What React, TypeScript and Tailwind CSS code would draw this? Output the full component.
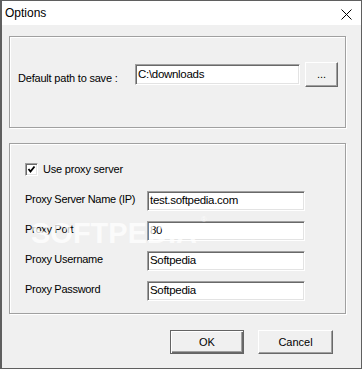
// Options dialog — Windows classic style settings window
import React from 'react'

const font = { fontFamily: '"Liberation Sans", Arial, sans-serif' }

function Field({ value, className = '' }: { value: string; className?: string }) {
  return (
    <div
      className={
        'flex items-center bg-white border border-t-[#a0a0a0] border-l-[#a0a0a0] border-b-white border-r-white shadow-[inset_1px_1px_0_#696969,inset_-1px_-1px_0_#e3e3e3] pl-[2px] text-[11.5px] tracking-[-0.3px] text-black ' +
        className
      }
    >
      {value}
    </div>
  )
}

function Button({ label, isDefault = false, className = '' }: { label: string; isDefault?: boolean; className?: string }) {
  return (
    <button
      className={
        'flex items-center justify-center bg-[#f0f0f0] text-[11px] text-black ' +
        (isDefault
          ? 'border border-[#646464] shadow-[inset_1px_1px_0_#fff,inset_-1px_-1px_0_#696969,inset_-2px_-2px_0_#a0a0a0] '
          : 'border border-t-white border-l-white border-b-[#696969] border-r-[#696969] shadow-[inset_-1px_-1px_0_#a0a0a0] ') +
        className
      }
    >
      {label}
    </button>
  )
}

function Row({ label, value }: { label: string; value: string }) {
  return (
    <div className="flex items-start h-[30px]">
      <span className="w-[122px] mt-[2px] text-[11px] tracking-[-0.3px] text-black leading-[13px]">{label}</span>
      <Field value={value} className="w-[158px] h-[20px]" />
    </div>
  )
}

export default function App() {
  return (
    <div
      className="relative w-[362px] h-[369px] border border-[#5f5f5f] border-l-2 bg-[#f0f0f0] overflow-hidden"
      style={font}
    >
      {/* Title bar */}
      <div className="flex items-center justify-between h-[24px] bg-white pl-[3px] pr-[9px]">
        <span className="text-[12px] text-black">Options</span>
        <svg width="11" height="11" viewBox="0 0 11 11" className="mt-[2px]">
          <path d="M0.5 0.5 L10.5 10.5 M10.5 0.5 L0.5 10.5" stroke="#000" strokeWidth="1" />
        </svg>
      </div>

      <div className="pl-[7px] pr-[15px] pt-[11px]">
        {/* Save path group */}
        <div className="h-[92px] border border-[#a0a0a0] shadow-[inset_1px_1px_0_#fff,1px_1px_0_#fff] pl-[8px] pt-[25px] flex items-start">
          <span className="w-[117px] mt-[10px] text-[11px] tracking-[-0.2px] leading-[13px] text-black">Default path to save :</span>
          <Field value="C:\downloads" className="w-[165px] h-[21px] mt-[2px]" />
          <Button label="..." className="w-[33px] h-[25px] ml-[5px]" />
        </div>

        {/* Proxy group */}
        <div className="h-[171px] mt-[15px] border border-[#a0a0a0] shadow-[inset_1px_1px_0_#fff,1px_1px_0_#fff] pl-[15px] pt-[19px] flex flex-col">
          <label className="flex items-center h-[13px] mb-[15px]">
            <span className="flex items-center justify-center w-[13px] h-[13px] bg-white border border-t-[#a0a0a0] border-l-[#a0a0a0] border-b-white border-r-white shadow-[inset_1px_1px_0_#696969,inset_-1px_-1px_0_#e3e3e3]">
              <svg width="9" height="9" viewBox="0 0 9 9">
                <path d="M1.5 4 L3.5 6.5 L7.5 1.5" stroke="#000" strokeWidth="1.8" fill="none" />
              </svg>
            </span>
            <span className="ml-[5px] text-[11px] tracking-[-0.2px] text-black">Use proxy server</span>
          </label>
          <Row label="Proxy Server Name (IP)" value="test.softpedia.com" />
          <Row label="Proxy Port" value="80" />
          <Row label="Proxy Username" value="Softpedia" />
          <Row label="Proxy Password" value="Softpedia" />
        </div>

        {/* Dialog buttons */}
        <div className="flex justify-end gap-[14px] mt-[16px] pr-[13px]">
          <Button label="OK" isDefault className="w-[74px] h-[24px]" />
          <Button label="Cancel" className="w-[75px] h-[24px]" />
        </div>
      </div>

      {/* Watermark */}
      <div className="absolute left-[29px] top-[211px] text-[29px] font-bold text-white/75 pointer-events-none select-none">
        SOFTPEDIA
        <span className="absolute -right-[10px] top-[2px] text-[8px] font-normal">®</span>
      </div>
    </div>
  )
}
